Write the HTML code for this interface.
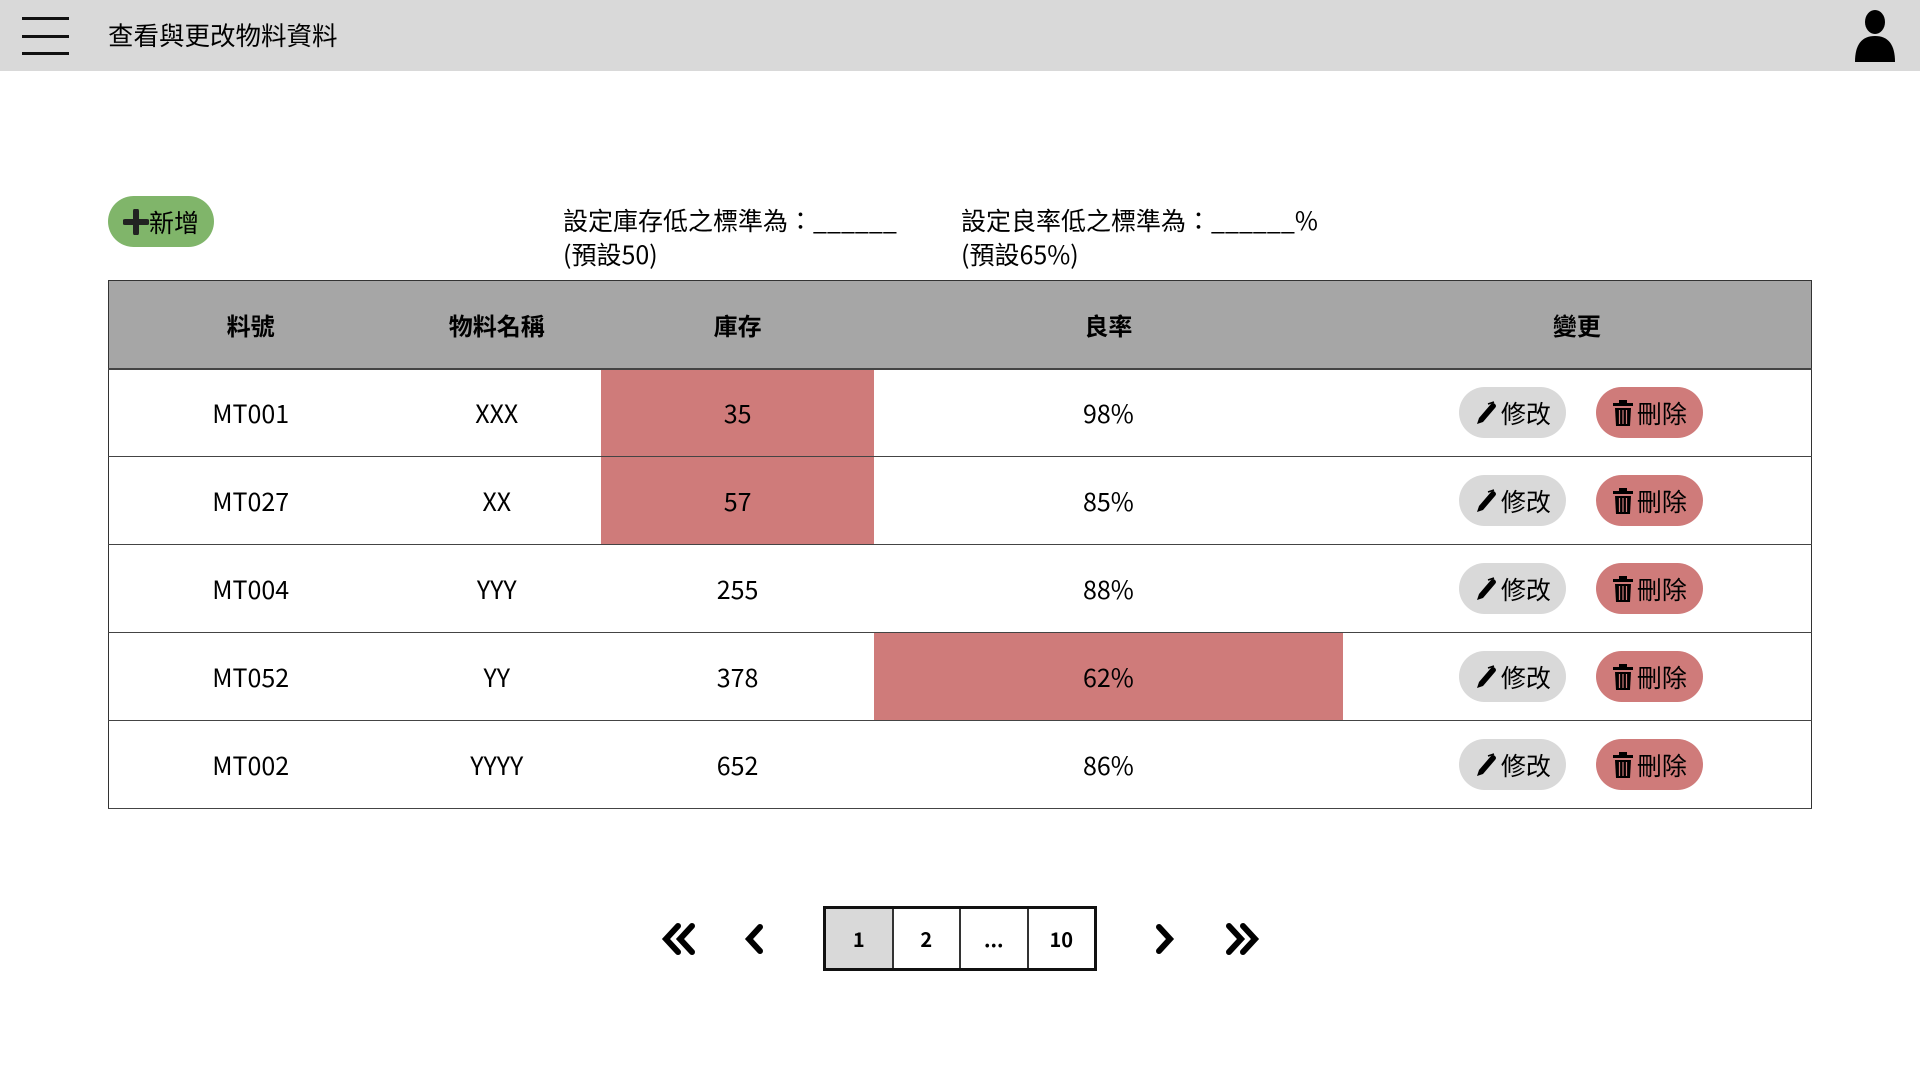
<!DOCTYPE html>
<html><head><meta charset="utf-8"><style>
*{margin:0;padding:0;box-sizing:border-box}
body{width:1920px;height:1080px;background:#fff;position:relative;overflow:hidden;font-family:"Noto Sans CJK TC","Liberation Sans",sans-serif;color:#000}
.abs{position:absolute}
.hdr{left:0;top:0;width:1920px;height:71px;background:#d9d9d9}
.bar{left:22px;width:47px;height:3px;background:#111}
table{position:absolute;left:108px;top:280px;width:1704px;border-collapse:collapse;border:1px solid #333}
td,th{height:88px;text-align:center;font-size:25px;border-bottom:1.5px solid #444;padding:0}
th{background:#a6a6a6;font-weight:bold;font-size:24px;border-bottom:2px solid #444}
.red{background:#cf7b7a}
.btn{display:inline-flex;align-items:center;justify-content:center;width:107px;height:51px;border-radius:26px;font-size:25px;vertical-align:middle}
.btn svg{margin-right:3px}
.e{background:#d9d9d9;margin-right:30px;margin-left:8px}
.d{background:#cf7b7a}
.pg{left:823px;top:906px;width:274px;height:65px;border:3px solid #111;display:flex}
.pg div{flex:1;display:flex;align-items:center;justify-content:center;font-size:20px;font-weight:bold;border-right:2px solid #333}
.pg div:last-child{border-right:none}
</style></head><body>
<div class="abs hdr"></div>
<div class="abs bar" style="top:17px"></div>
<div class="abs bar" style="top:35px"></div>
<div class="abs bar" style="top:52px"></div>
<div class="abs" style="left:108px;top:17px;font-size:25.5px;line-height:36px">查看與更改物料資料</div>
<svg class="abs" style="left:1853px;top:10px" width="44" height="52" viewBox="0 0 44 52"><ellipse cx="22" cy="12" rx="10" ry="12" fill="#000"/><path d="M2 52 Q2 26 22 26 Q42 26 42 52Z" fill="#000"/></svg>

<div class="abs" style="left:108px;top:196px;width:106px;height:51px;border-radius:26px;background:#80b56a;display:flex;align-items:center;justify-content:center;font-size:25px">
<svg width="26" height="26" viewBox="0 0 26 26"><path d="M13 2V24M2 13H24" stroke="#222" stroke-width="6" stroke-linecap="round"/></svg>新增</div>
<div class="abs" style="left:563px;top:203px;font-size:25px;line-height:34px">設定庫存低之標準為：______<br>(預設50)</div>
<div class="abs" style="left:961px;top:203px;font-size:25px;line-height:34px">設定良率低之標準為：______%<br>(預設65%)</div>

<table></table>
<script>
var p='<svg width="24" height="26" viewBox="0 0 24 26"><path d="M3 24L5 18L17 4Q19 2 21 4Q23 6 21 8L9 22Z" fill="#000"/><path d="M14 4L20 2" stroke="#000" stroke-width="1.5"/></svg>';
var t='<svg width="22" height="26" viewBox="0 0 22 26"><rect x="1" y="3" width="20" height="3" fill="#000"/><rect x="7" y="0" width="8" height="4" fill="#000"/><path d="M3 8H19L18 26H4Z" fill="#000"/><path d="M7.5 10V24M11 10V24M14.5 10V24" stroke="#cf7b7a" stroke-width="1.2"/></svg>';
var b='<span class="btn e">'+p+'修改</span><span class="btn d">'+t+'刪除</span>';
var rows=[["MT001","XXX","35","98%",1,0],["MT027","XX","57","85%",1,0],["MT004","YYY","255","88%",0,0],["MT052","YY","378","62%",0,1],["MT002","YYYY","652","86%",0,0]];
var h='<colgroup><col style="width:284px"><col style="width:209px"><col style="width:273px"><col style="width:469px"><col style="width:469px"></colgroup><tr><th>料號</th><th>物料名稱</th><th>庫存</th><th>良率</th><th>變更</th></tr>';
rows.forEach(function(r){h+='<tr><td>'+r[0]+'</td><td>'+r[1]+'</td><td'+(r[4]?' class="red"':'')+'>'+r[2]+'</td><td'+(r[5]?' class="red"':'')+'>'+r[3]+'</td><td>'+b+'</td></tr>';});
document.querySelector('table').innerHTML=h;
</script>

<svg class="abs" style="left:660px;top:922px" width="40" height="34" viewBox="0 0 40 34"><path d="M18 4L6 17L18 30M32 4L20 17L32 30" stroke="#000" stroke-width="6" fill="none" stroke-linecap="round"/></svg>
<svg class="abs" style="left:742px;top:922px" width="24" height="34" viewBox="0 0 24 34"><path d="M18 5L7 17L18 29" stroke="#000" stroke-width="6" fill="none" stroke-linecap="round"/></svg>
<div class="abs pg"><div style="background:#d9d9d9">1</div><div>2</div><div>...</div><div>10</div></div>
<svg class="abs" style="left:1153px;top:922px" width="24" height="34" viewBox="0 0 24 34"><path d="M6 5L17 17L6 29" stroke="#000" stroke-width="6" fill="none" stroke-linecap="round"/></svg>
<svg class="abs" style="left:1221px;top:922px" width="40" height="34" viewBox="0 0 40 34"><path d="M8 4L20 17L8 30M22 4L34 17L22 30" stroke="#000" stroke-width="6" fill="none" stroke-linecap="round"/></svg>
</body></html>
